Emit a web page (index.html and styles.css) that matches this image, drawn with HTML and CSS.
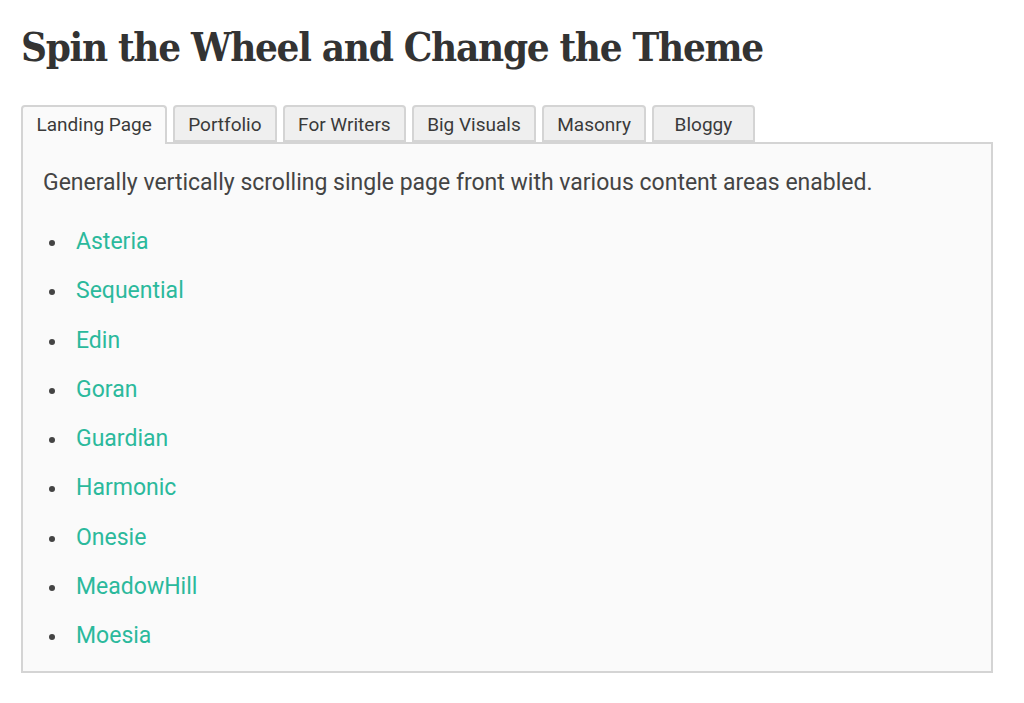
FILE: index.html
```html
<!DOCTYPE html>
<html>
<head>
    <title>Spin the Wheel and Change the Theme</title>
    <link rel="stylesheet" href="styles.css">
</head>
<body>
    <div class="container">
        <h1>Spin the Wheel and Change the Theme</h1>

        <div class="tabs">
            <span class="tab active">Landing Page</span>
            <span class="tab">Portfolio</span>
            <span class="tab">For Writers</span>
            <span class="tab">Big Visuals</span>
            <span class="tab">Masonry</span>
            <span class="tab">Bloggy</span>
        </div>

        <div class="panel">
            <p>Generally vertically scrolling single page front with various content areas enabled.</p>
            <ul class="theme-list">
                <li><a href="#">Asteria</a></li>
                <li><a href="#">Sequential</a></li>
                <li><a href="#">Edin</a></li>
                <li><a href="#">Goran</a></li>
                <li><a href="#">Guardian</a></li>
                <li><a href="#">Harmonic</a></li>
                <li><a href="#">Onesie</a></li>
                <li><a href="#">MeadowHill</a></li>
                <li><a href="#">Moesia</a></li>
            </ul>
        </div>
    </div>
</body>
</html>
```

FILE: styles.css
```css
* {
    margin: 0;
    padding: 0;
    box-sizing: border-box;
}

body {
    background: #fff;
    font-family: Roboto, 'Liberation Sans', sans-serif;
    color: #404040;
}

.container {
    width: 972px;
    margin-left: 21px;
}

h1 {
    font-family: 'DejaVu Serif Condensed', 'DejaVu Serif', 'Liberation Serif', serif;
    font-stretch: condensed;
    font-weight: bold;
    font-size: 40px;
    letter-spacing: -1.3px;
    color: #333;
    line-height: 48px;
    padding-top: 23px;
    margin-bottom: 34px;
}

.tabs {
    display: flex;
    gap: 5.5px;
    align-items: flex-end;
}

.tab {
    display: inline-block;
    min-width: 103px;
    height: 37px;
    padding: 0 13.5px;
    line-height: 36px;
    text-align: center;
    font-size: 19px;
    color: #3a3a3a;
    background: #efefef;
    border: 2px solid #d4d4d4;
    border-radius: 4px 4px 0 0;
}

.tab.active {
    background: #fafafa;
    border-bottom: none;
    height: 39px;
    margin-bottom: -2px;
    position: relative;
    z-index: 1;
}

.panel {
    background: #fafafa;
    border: 2px solid #d4d4d4;
    padding: 24px 20px 20px;
    height: 531px;
}

.panel p {
    font-size: 23px;
    line-height: 30px;
    color: #444;
    margin-bottom: 29px;
}

.theme-list {
    list-style: none;
}

.theme-list li {
    position: relative;
    padding-left: 33px;
    font-size: 23px;
    line-height: 30px;
    margin-bottom: 19.25px;
}

.theme-list li::before {
    content: "";
    position: absolute;
    left: 6px;
    top: 13px;
    width: 6px;
    height: 6px;
    border-radius: 50%;
    background: #444;
}

.theme-list a {
    color: #2bb99c;
    text-decoration: none;
}
```
